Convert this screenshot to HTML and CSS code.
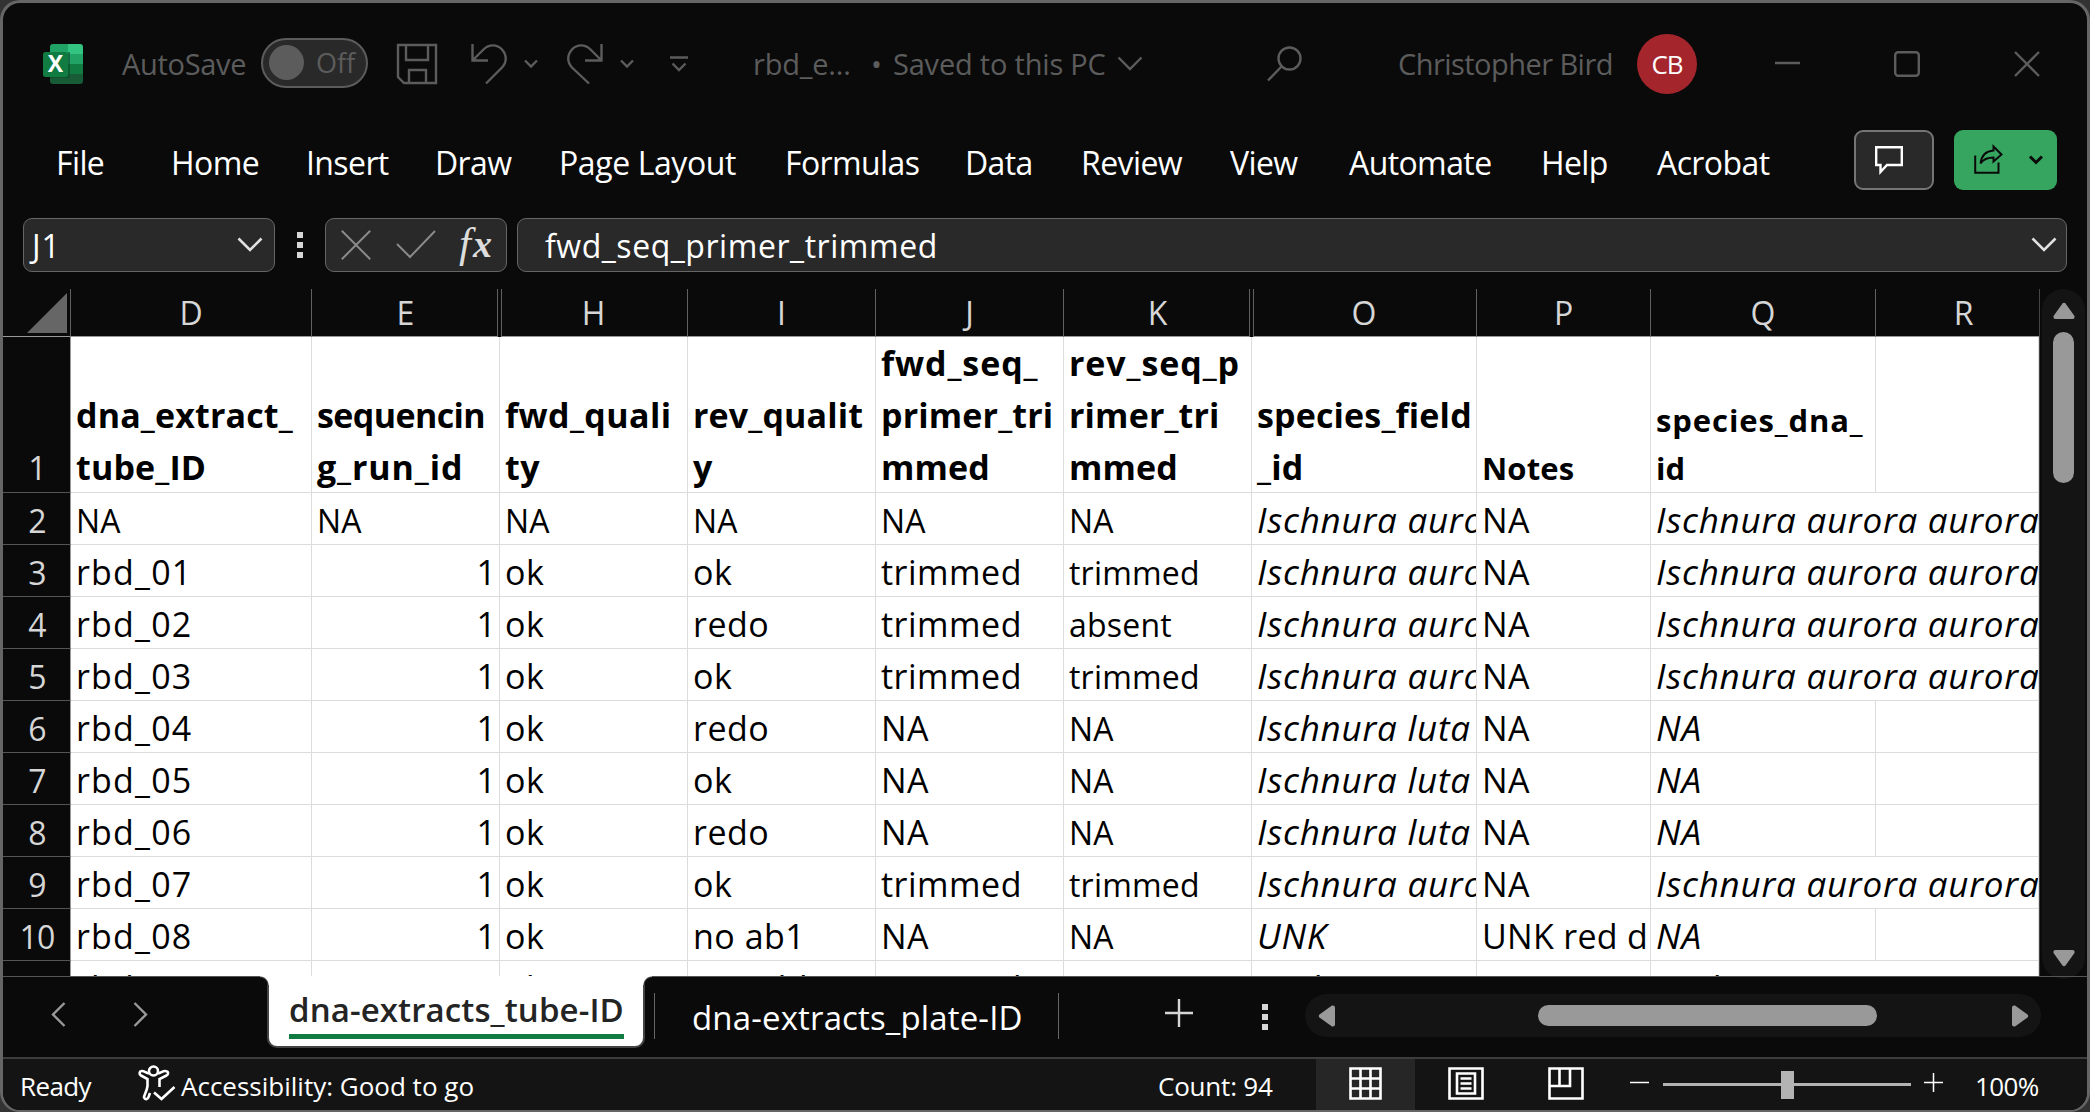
FILE: index.html
```html
<!DOCTYPE html>
<html lang="en">
<head>
<meta charset="utf-8">
<title>Workbook</title>
<link rel="stylesheet" href="styles.css">
</head>
<body>
<div class="window">
  <header class="titlebar">
    <svg class="logo" width="40" height="40" viewBox="0 0 40 40">
      <path d="M10 0H25V20H7V3Q7 0 10 0Z" fill="#21a366"/>
      <path d="M25 0H37Q40 0 40 3V10H25Z" fill="#33c481"/>
      <path d="M25 10H40V20H25Z" fill="#21a366"/>
      <path d="M7 20H40V30H7Z" fill="#107c41"/>
      <path d="M7 30H40V37Q40 40 37 40H10Q7 40 7 37Z" fill="#185c37"/>
      <path d="M25 8H27V32Q27 34 24 34H7V30H25Z" fill="#0b4a29" opacity=".6"/>
      <rect x="0" y="8" width="25" height="25" rx="2.500" fill="#107c41"/>
      <text x="12.500" y="28" class="logo-x">X</text>
    </svg>
    <span class="autosave">AutoSave</span>
    <div class="toggle"><i></i><span>Off</span></div>
    <svg class="save" width="40" height="40" viewBox="0 0 40 40"><path d="M1 1H39V39H7L1 33Z M9 1V16H31V1 M12 39V26H29V39"/></svg>
    <svg class="undo" width="36" height="40" viewBox="0 0 36 40"><path d="M1.500 0V16.500H17 M2 16L12.500 5.500C18 0 26 0 31 5.500C36 11 36 18 31 23.500L15 39.500"/></svg>
    <svg class="chev-s c1" width="14" height="10" viewBox="0 0 14 10"><path d="M1 1.500L7 7.500L13 1.500"/></svg>
    <svg class="redo" width="36" height="40" viewBox="0 0 36 40"><path d="M34.500 0V16.500H18 M34 16L23.500 5.500C18 0 10 0 5 5.500C0 11 0 18 5 23.500L22 39.500"/></svg>
    <svg class="chev-s c2" width="14" height="10" viewBox="0 0 14 10"><path d="M1 1.500L7 7.500L13 1.500"/></svg>
    <svg class="custom" width="18" height="16" viewBox="0 0 18 16"><path d="M0 1.500H18 M2.500 7.500L9 14L15.500 7.500"/></svg>
    <span class="docname">rbd_e...</span>
    <span class="dot">•</span>
    <span class="saved">Saved to this PC</span>
    <svg class="chev" width="26" height="16" viewBox="0 0 26 16"><path d="M1.500 1.500L13 13L24.500 1.500"/></svg>
    <svg class="search" width="36" height="36" viewBox="0 0 36 36"><circle cx="22.500" cy="12.500" r="11"/><path d="M14.500 20.500L1 34.500"/></svg>
    <span class="user">Christopher Bird</span>
    <span class="avatar">CB</span>
    <svg class="min" width="26" height="26" viewBox="0 0 26 26"><path d="M0 12H25"/></svg>
    <svg class="max" width="26" height="26" viewBox="0 0 26 26"><rect x="1.200" y="1.200" width="23.600" height="23.600" rx="3"/></svg>
    <svg class="close" width="26" height="26" viewBox="0 0 26 26"><path d="M1 1L25 25M25 1L1 25"/></svg>
  </header>
  <nav class="menu">
    <span class="m1">File</span><span class="m2">Home</span><span class="m3">Insert</span><span class="m4">Draw</span><span class="m5">Page Layout</span><span class="m6">Formulas</span><span class="m7">Data</span><span class="m8">Review</span><span class="m9">View</span><span class="m10">Automate</span><span class="m11">Help</span><span class="m12">Acrobat</span>
    <button class="comment"><svg width="28" height="28" viewBox="0 0 28 28"><path d="M1.200 1.200H26.800V19H12L5.500 26V19H1.200Z"/></svg></button>
    <button class="share">
      <svg class="share-i" width="29" height="29" viewBox="0 0 29 29"><path d="M1.200 10.500V27.800H24.500V17.500M6.500 18.500C7.500 11 12 6 19.500 5.500V1.500L27.500 9.500L19.500 16.500V12.500C13.500 12.500 9.500 14 6.500 18.500Z"/></svg>
      <svg class="thick" width="14" height="10" viewBox="0 0 14 10"><path d="M1 1.500L7 7.500L13 1.500"/></svg>
    </button>
  </nav>
  <div class="formula-row">
    <div class="box namebox"><span>J1</span><svg width="26" height="16" viewBox="0 0 26 16"><path d="M1.500 1.500L13 13L24.500 1.500"/></svg></div>
    <div class="dots"><i></i><i></i><i></i></div>
    <div class="box actions">
      <svg width="30" height="30" viewBox="0 0 30 30"><path d="M.8.800L29.200 29.200M29.200.800L.8 29.200"/></svg>
      <svg class="check" width="40" height="30" viewBox="0 0 40 30"><path d="M1 14L14 27L39 1"/></svg>
      <span class="fx">f<b>x</b></span>
    </div>
    <div class="box formula"><span>fwd_seq_primer_trimmed</span><svg width="26" height="16" viewBox="0 0 26 16"><path d="M1.500 1.500L13 13L24.500 1.500"/></svg></div>
  </div>
  <main class="sheet">
    <div class="grid">
      <div class="row heads"><span class="corner"><i></i></span><span>D</span><span class="skip">E</span><span class="after">H</span><span>I</span><span>J</span><span class="skip">K</span><span class="after">O</span><span>P</span><span>Q</span><span class="cut">R</span></div>
      <div class="row first"><b>1</b><span>dna_extract_<br>tube_ID</span><span><em class="narrow">sequencin</em><em class="wide">g_run_id</em></span><span class="mid">fwd_quali<br>ty</span><span>rev_qualit<br>y</span><span><em class="wide">fwd_seq_</em>primer_tri<br>mmed</span><span><em class="wide">rev_seq_p</em>rimer_tri<br>mmed</span><span>species_field<br>_id</span><span class="sm">Notes</span><span class="sm"><em class="wide">species_dna_</em>id</span><span></span></div>
      <div class="row two"><b>2</b><span>NA</span><span>NA</span><span>NA</span><span>NA</span><span>NA</span><span>NA</span><span>Ischnura aurora</span><span>NA</span><span>Ischnura aurora aurora</span></div>
      <div class="row"><b>3</b><span>rbd_01</span><span>1</span><span>ok</span><span>ok</span><span>trimmed</span><span>trimmed</span><span>Ischnura aurora</span><span>NA</span><span>Ischnura aurora aurora</span></div>
      <div class="row"><b>4</b><span>rbd_02</span><span>1</span><span>ok</span><span>redo</span><span>trimmed</span><span>absent</span><span>Ischnura aurora</span><span>NA</span><span>Ischnura aurora aurora</span></div>
      <div class="row"><b>5</b><span>rbd_03</span><span>1</span><span>ok</span><span>ok</span><span>trimmed</span><span>trimmed</span><span>Ischnura aurora</span><span>NA</span><span>Ischnura aurora aurora</span></div>
      <div class="row"><b>6</b><span>rbd_04</span><span>1</span><span>ok</span><span>redo</span><span>NA</span><span>NA</span><span>Ischnura luta</span><span>NA</span><span class="one">NA</span><span></span></div>
      <div class="row"><b>7</b><span>rbd_05</span><span>1</span><span>ok</span><span>ok</span><span>NA</span><span>NA</span><span>Ischnura luta</span><span>NA</span><span class="one">NA</span><span></span></div>
      <div class="row"><b>8</b><span>rbd_06</span><span>1</span><span>ok</span><span>redo</span><span>NA</span><span>NA</span><span>Ischnura luta</span><span>NA</span><span class="one">NA</span><span></span></div>
      <div class="row"><b>9</b><span>rbd_07</span><span>1</span><span>ok</span><span>ok</span><span>trimmed</span><span>trimmed</span><span>Ischnura aurora</span><span>NA</span><span>Ischnura aurora aurora</span></div>
      <div class="row"><b>10</b><span>rbd_08</span><span>1</span><span>ok</span><span>no ab1</span><span>NA</span><span>NA</span><span>UNK</span><span>UNK red d</span><span class="one">NA</span><span></span></div>
      <div class="row"><b></b><span>rbd_09</span><span></span><span>ok</span><span>possible</span><span>trimmed</span><span></span><span>such</span><span></span><span>such</span></div>
    </div>
    <div class="vscroll"><svg width="22" height="17" viewBox="0 0 22 17"><path d="M9.500 1.500Q11 0 12.500 1.500L21.500 14Q22 17 19.500 17H2.500Q0 17 .5 14Z"/></svg><i></i><svg class="down" width="22" height="17" viewBox="0 0 22 17"><path d="M9.500 1.500Q11 0 12.500 1.500L21.500 14Q22 17 19.500 17H2.500Q0 17 .5 14Z"/></svg></div>
  </main>
  <div class="tabs">
    <svg class="prev" width="15" height="25" viewBox="0 0 15 25"><path d="M13.500 1L2 12.500L13.500 24"/></svg>
    <svg class="next" width="15" height="25" viewBox="0 0 15 25"><path d="M1.500 1L13 12.500L1.500 24"/></svg>
    <div class="tab-active"><span>dna-extracts_tube-ID</span></div>
    <div class="tab"><span>dna-extracts_plate-ID</span></div>
    <svg class="plus" width="28" height="28" viewBox="0 0 28 28"><path d="M0 14H28M14 0V28"/></svg>
    <div class="dots tabdots"><i></i><i></i><i></i></div>
    <div class="hscroll"><svg width="17" height="22" viewBox="0 0 17 22"><path d="M1.500 9.500Q0 11 1.500 12.500L14 21.500Q17 22 17 19.500V2.500Q17 0 14 .5Z"/></svg><i></i><svg class="right" width="17" height="22" viewBox="0 0 17 22"><path d="M1.500 9.500Q0 11 1.500 12.500L14 21.500Q17 22 17 19.500V2.500Q17 0 14 .5Z"/></svg></div>
  </div>
  <footer class="status">
    <span class="ready">Ready</span>
    <svg class="access" width="38" height="36" viewBox="0 0 38 36"><circle cx="15.500" cy="6" r="4.500"/><path d="M11 8.500C8 8 6 5.500 3.500 6C1 6.500 1 9.500 3 10.500L9.500 14V21C9 26 6 30 6 32.500C7 35 10 34.500 10.500 32L12 28M20 8.500C23 8 25 5.500 27.500 6C31 6.500 30.500 9.500 28.500 10.500L21.500 14V22M16 27.500L23.500 34L36.500 22"/></svg>
    <span class="good">Accessibility: Good to go</span>
    <span class="count">Count: 94</span>
    <div class="view-on"><svg width="33" height="33" viewBox="0 0 33 33"><path d="M1.500 1.500H31.500V31.500H1.500ZM11.500 1V32M21.500 1V32M1 11.500H32M1 21.500H32"/></svg></div>
    <svg class="v2" width="36" height="33" viewBox="0 0 36 33"><path d="M1.500 1.500H34.500V31.500H1.500ZM9 6.500H27V26.500H9ZM12.500 11.500H23.500M12.500 16.500H23.500M12.500 21.500H23.500"/></svg>
    <svg class="v3" width="36" height="33" viewBox="0 0 36 33"><path d="M1.500 1.500H34.500V31.500H1.500ZM1.500 19H22V1.500M11.500 1.500V19"/></svg>
    <svg class="zminus" width="19" height="20" viewBox="0 0 19 20"><path d="M0 9.500H19"/></svg>
    <div class="slider"><i></i></div>
    <svg class="zplus" width="19" height="20" viewBox="0 0 19 20"><path d="M0 9.500H19M9.500 0V19"/></svg>
    <span class="pct">100%</span>
  </footer>
</div>
</body>
</html>
```
FILE: styles.css
```css
* { box-sizing: border-box; }
body { margin: 0; background: #333; font-family: "Open Sans", "Noto Sans", sans-serif; overflow: hidden; }
svg { fill: none; display: block; flex: none; overflow: visible; }
span { white-space: nowrap; }
.window { width: 2090px; height: 1112px; border: 3px solid #666; border-bottom-width: 2px; border-radius: 20px; background: #0a0a0a; overflow: hidden; display: flex; flex-direction: column; }

/* title bar */
.titlebar { height: 117px; padding-top: 4px; flex: none; display: flex; align-items: center; color: #5c5c5c; font-size: 29px; stroke: #5c5c5c; stroke-width: 2.4; }
.titlebar > span { stroke: none; flex: none; }
.logo { margin-left: 40px; stroke: none; }
.logo-x { font: bold 23px "Open Sans", sans-serif; fill: #fff; text-anchor: middle; }
.autosave { margin-left: 39px; width: 139px; letter-spacing: -.3px; }
.toggle { width: 107px; height: 50px; margin-top: -2px; flex: none; border: 2px solid #5c5c5c; border-radius: 25px; background: #292929; display: flex; align-items: center; padding-left: 6px; font-size: 27px; }
.toggle span { stroke: none; }
.toggle i { width: 35px; height: 35px; border-radius: 50%; background: #5c5c5c; margin-right: 12px; }
.save { margin-left: 29px; }
.undo { margin-left: 34px; }
.c1 { margin-left: 17px; }
.redo { margin-left: 29px; }
.c2 { margin-left: 17px; }
.custom { margin-left: 36px; }
.docname { margin-left: 65px; width: 118px; letter-spacing: -.2px; }
.dot { width: 22px; }
.saved { width: 224px; letter-spacing: -.2px; }
.search { margin-left: 124px; }
.user { margin-left: 95px; width: 239px; letter-spacing: -.55px; }
.avatar { width: 60px; height: 60px; border-radius: 50%; background: #a4262c; color: #fff; font-size: 26px; display: flex; align-items: center; justify-content: center; letter-spacing: -1px; }
.min { margin-left: 78px; }
.max { margin-left: 93px; }
.close { margin-left: 94px; }

/* ribbon tabs */
.menu { height: 79px; flex: none; display: flex; align-items: center; color: #fff; font-size: 32px; letter-spacing: -.6px; }
.menu span { flex: none; margin-top: 6px; }
.m1 { margin-left: 53px; width: 115px; } .m2 { width: 135px; } .m3 { width: 129px; } .m4 { width: 124px; }
.m5 { width: 226px; letter-spacing: -.4px; } .m6 { width: 180px; } .m7 { width: 116px; } .m8 { width: 149px; } .m9 { width: 119px; }
.m10 { width: 192px; } .m11 { width: 116px; } .m12 { width: 197px; }
.comment, .share { font: inherit; padding: 0; height: 60px; margin: 0; border-radius: 9px; display: flex; align-items: center; flex: none; }
.comment { width: 80px; background: #292929; border: 2px solid #757575; padding-left: 19px; stroke: #fff; stroke-width: 2.400; }
.share { width: 103px; margin-left: 20px; background: #36a560; border: 0; padding-left: 20px; gap: 26px; stroke: #0a0a0a; stroke-width: 2; }
.thick { stroke-width: 3; }

/* formula bar */
.formula-row { height: 90px; flex: none; padding: 19px 0 0 20px; display: flex; align-items: flex-start; color: #fff; font-size: 32px; }
.box { height: 54px; background: #292929; border: 1px solid #666; border-radius: 9px; display: flex; align-items: center; flex: none; stroke: #e0e0e0; stroke-width: 2.600; }
.box span { stroke: none; padding-top: 1px; }
.namebox { width: 252px; padding: 0 11px 0 8px; justify-content: space-between; letter-spacing: .8px; }
.dots { display: flex; flex-direction: column; gap: 4px; margin: 14px 22px 0 22px; flex: none; }
.dots i { width: 6px; height: 6px; background: #d6d6d6; }
.actions { width: 182px; padding-left: 15px; stroke: #8a8a8a; stroke-width: 2; }
.check { margin-left: 25px; }
.fx { margin: -7px 0 0 23px; font: italic 43px "Liberation Serif", serif; color: #ddd; letter-spacing: 2px; }
.fx b { font-weight: bold; font-size: 38px; letter-spacing: 0; }
.formula { width: 1550px; margin-left: 10px; padding: 0 9px 0 27px; justify-content: space-between; letter-spacing: .55px; }

/* worksheet */
.sheet { height: 687px; flex: none; display: flex; }
.grid { width: 2037px; height: 687px; flex: none; overflow: hidden; border-right: 1px solid #444; }
.row { display: grid; grid-template-rows: 100%; grid-template-columns: 68px 241px 188px 188px 188px 188px 188px 225px 174px 225px 163px; height: 52px; font-size: 34px; line-height: 51px; letter-spacing: .5px; background: #fff; color: #000; }
.row > span { border-right: 1px solid #dcdcdc; border-bottom: 1px solid #dcdcdc; padding: 2px 0 0 5px; overflow: hidden; }
.row > b { background: #0a0a0a; color: #d6d6d6; font-weight: 400; font-size: 32px; text-align: center; letter-spacing: -.8px; border-right: 1px solid #999; border-bottom: 1px solid #555; padding: 2px 0 0 1px; }
.heads { height: 48px; background: #0a0a0a; color: #d6d6d6; font-size: 32px; line-height: 48px; letter-spacing: 0; }
.row.heads > span { text-align: center; padding: 0; border-right-color: #606060; border-bottom-color: #999; }
.row.heads > .skip { margin-right: 2px; padding-left: 2px; }
.row.heads > .after { border-left: 1px solid #606060; margin-left: 1px; padding-right: 2px; }
.row.heads > .cut { padding-left: 12px; border-right: 0; }
.corner { display: flex; justify-content: flex-end; align-items: flex-end; }
.corner i { width: 40px; height: 40px; margin: 0 3px 3px 0; background: #666; clip-path: polygon(100% 0, 100% 100%, 0 100%); }
.first { height: 156px; font-weight: 700; line-height: 52px; letter-spacing: .15px; }
.row.first > span { align-content: end; padding-top: 0; border-bottom: 0; box-shadow: inset 0 -1px #dcdcdc; }
.row.first > .sm { font-size: 31px; line-height: 48px; padding-bottom: 1px; }
.row.first > b { padding-top: 105px; }
.first em { display: block; font-style: normal; }
.first .wide { letter-spacing: .9px; }
.first .narrow { letter-spacing: -.6px; }
.first .mid { letter-spacing: .4px; }
.row:not(.heads):not(.first):not(.two) > span:nth-child(2) { letter-spacing: 1.200px; }
.row:not(.heads):not(.first):not(.two) > span:nth-child(3) { text-align: right; padding-right: 3px; letter-spacing: 0; }
.row:not(.heads):not(.first) > span:nth-child(7), .two > span:nth-child(-n+7) { font-size: 32px; line-height: 52px; letter-spacing: .2px; }
.row:not(.heads):not(.first) > span:nth-child(8), .row:not(.heads):not(.first) > span:nth-child(10) { font-style: italic; font-size: 35px; letter-spacing: .75px; padding-top: 1px; }
.row:not(.heads):not(.first) > span:nth-child(9) { letter-spacing: .3px; }
.row:not(.heads):not(.first) > span:nth-child(10):not(.one) { grid-column: 10 / 12; }
.vscroll { width: 43px; height: 690px; margin-left: 2px; background: #141414; border-radius: 22px; display: flex; flex-direction: column; align-items: center; padding-top: 13px; flex: none; }
.vscroll svg, .hscroll svg { fill: #999; }
.vscroll i { width: 21px; height: 151px; border-radius: 11px; background: #999; margin-top: 13px; }
.down { transform: rotate(180deg); margin-top: 467px; }

/* sheet tabs */
.tabs { height: 81px; flex: none; border-top: 1px solid #555; display: flex; align-items: flex-start; stroke: #999; stroke-width: 2.400; font-size: 33px; }
.tabs span { stroke: none; }
.prev { margin: 25px 0 0 48px; }
.next { margin: 25px 0 0 67px; }
.tab-active { position: relative; flex: none; width: 378px; height: 72px; margin: -1px 0 0 119px; background: #fff; color: #242424; border: 2px solid #444; border-top: 0; border-radius: 0 0 10px 10px; padding: 8px 19px 0 20px; font-weight: 600; }
.tab-active::before, .tab-active::after { content: ""; position: absolute; top: 0; width: 9px; height: 9px; }
.tab-active::before { left: -9px; background: radial-gradient(circle at 0 100%, #0a0a0a 7px, #444 8px, #fff 9px); }
.tab-active::after { right: -9px; background: radial-gradient(circle at 100% 100%, #0a0a0a 7px, #444 8px, #fff 9px); }
.tab-active span { display: block; height: 55px; line-height: 52px; border-bottom: 5px solid #107c41; letter-spacing: .1px; }
.tab { flex: none; width: 405px; height: 46px; margin: 16px 0 0 9px; border: solid #666; border-width: 0 1px; padding-left: 37px; line-height: 49px; color: #fff; letter-spacing: .15px; }
.plus { margin: 22px 0 0 106px; stroke: #d6d6d6; }
.tabdots { margin: 27px 37px 0 69px; }
.hscroll { width: 736px; height: 43px; flex: none; margin-top: 17px; background: #141414; border-radius: 22px; display: flex; align-items: center; padding-left: 13px; stroke: none; }
.hscroll i { width: 339px; height: 21px; border-radius: 11px; background: #999; margin: 0 135px 0 203px; }
.right { transform: rotate(180deg); }

/* status bar */
.status { height: 53px; flex: none; background: #141414; border-top: 2px solid #3d3d3d; display: flex; align-items: center; font-size: 26px; color: #fff; stroke: #fff; stroke-width: 2.600; }
.status span { stroke: none; margin-top: 2px; flex: none; }
.status svg { margin-top: -3px; }
.ready { margin-left: 17px; width: 118px; letter-spacing: -.6px; }
.good { margin-left: 5px; width: 977px; }
.count { width: 158px; letter-spacing: -.2px; }
.view-on { width: 99px; height: 52px; margin-right: 33px; background: #262626; display: flex; align-items: center; justify-content: center; flex: none; }
.v3 { margin-left: 64px; }
.zminus { margin-left: 46px; stroke-width: 1.500; }
.slider { width: 248px; height: 3px; margin: 0 13px 0 14px; background: #b3b3b3; flex: none; display: flex; align-items: center; }
.slider i { width: 13px; height: 28px; flex: none; margin-left: 118px; background: #b3b3b3; }
.zplus { stroke-width: 1.500; }
.pct { margin-left: 32px; letter-spacing: -.6px; }
```
